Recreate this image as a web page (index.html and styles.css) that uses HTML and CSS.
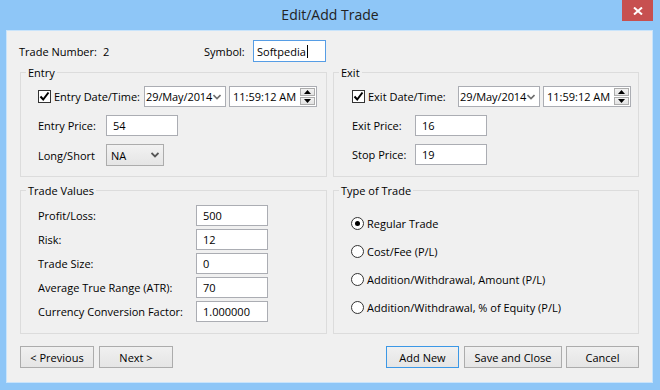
FILE: index.html
```html
<!DOCTYPE html>
<html lang="en">
<head>
    <meta charset="UTF-8">
    <title>Edit/Add Trade</title>
    <link rel="stylesheet" href="styles.css">
</head>
<body>
    <div class="window">
        <div class="titlebar">
            <span class="title">Edit/Add Trade</span>
            <div class="close-btn">
                <svg width="10" height="8" viewBox="0 0 10 8"><path d="M1 0.5 L9 7.5 M9 0.5 L1 7.5" stroke="#fff" stroke-width="2"/></svg>
            </div>
        </div>

        <div class="client">
            <div class="top-row">
                <span class="trade-label">Trade Number:</span>
                <span class="trade-number">2</span>
                <span class="symbol-label">Symbol:</span>
                <div class="textbox symbol-box">Softpedia<span class="caret"></span></div>
            </div>

            <div class="groups">
                <fieldset class="group entry-group">
                    <legend>Entry</legend>
                    <div class="group-body stack">
                        <div class="row">
                            <label class="check-label">
                                <span class="checkbox">
                                    <svg width="11" height="11" viewBox="0 0 11 11"><path d="M1.5 5.5 L4.2 8.5 L9.5 1.5" fill="none" stroke="#000" stroke-width="2"/></svg>
                                </span>
                                Entry Date/Time:
                            </label>
                            <div class="datebox">
                                <span class="date-text">29/May/2014</span>
                                <span class="chevron"><svg width="8" height="6" viewBox="0 0 8 6"><path d="M0.5 1 L4 4.5 L7.5 1" fill="none" stroke="#6d6d6d" stroke-width="1.6"/></svg></span>
                            </div>
                            <div class="timebox">
                                <span>11:59:12 AM</span>
                                <div class="spin">
                                    <div class="spin-btn"><svg width="7" height="4" viewBox="0 0 7 4"><path d="M0 4 L3.5 0 L7 4 Z" fill="#000"/></svg></div>
                                    <div class="spin-btn"><svg width="7" height="4" viewBox="0 0 7 4"><path d="M0 0 L3.5 4 L7 0 Z" fill="#000"/></svg></div>
                                </div>
                            </div>
                        </div>
                        <div class="row">
                            <span class="field-label">Entry Price:</span>
                            <div class="textbox">54</div>
                        </div>
                        <div class="row">
                            <span class="field-label">Long/Short</span>
                            <div class="combobox">
                                <span>NA</span>
                                <span class="chevron"><svg width="8" height="6" viewBox="0 0 8 6"><path d="M0.5 1 L4 4.5 L7.5 1" fill="none" stroke="#555" stroke-width="1.8"/></svg></span>
                            </div>
                        </div>
                    </div>
                </fieldset>

                <fieldset class="group exit-group">
                    <legend>Exit</legend>
                    <div class="group-body stack">
                        <div class="row">
                            <label class="check-label">
                                <span class="checkbox">
                                    <svg width="11" height="11" viewBox="0 0 11 11"><path d="M1.5 5.5 L4.2 8.5 L9.5 1.5" fill="none" stroke="#000" stroke-width="2"/></svg>
                                </span>
                                Exit Date/Time:
                            </label>
                            <div class="datebox">
                                <span class="date-text">29/May/2014</span>
                                <span class="chevron"><svg width="8" height="6" viewBox="0 0 8 6"><path d="M0.5 1 L4 4.5 L7.5 1" fill="none" stroke="#6d6d6d" stroke-width="1.6"/></svg></span>
                            </div>
                            <div class="timebox">
                                <span>11:59:12 AM</span>
                                <div class="spin">
                                    <div class="spin-btn"><svg width="7" height="4" viewBox="0 0 7 4"><path d="M0 4 L3.5 0 L7 4 Z" fill="#000"/></svg></div>
                                    <div class="spin-btn"><svg width="7" height="4" viewBox="0 0 7 4"><path d="M0 0 L3.5 4 L7 0 Z" fill="#000"/></svg></div>
                                </div>
                            </div>
                        </div>
                        <div class="row">
                            <span class="field-label">Exit Price:</span>
                            <div class="textbox">16</div>
                        </div>
                        <div class="row">
                            <span class="field-label">Stop Price:</span>
                            <div class="textbox">19</div>
                        </div>
                    </div>
                </fieldset>

                <fieldset class="group values-group">
                    <legend>Trade Values</legend>
                    <div class="group-body values">
                        <div class="row"><span class="field-label">Profit/Loss:</span><div class="textbox">500</div></div>
                        <div class="row"><span class="field-label">Risk:</span><div class="textbox">12</div></div>
                        <div class="row"><span class="field-label">Trade Size:</span><div class="textbox">0</div></div>
                        <div class="row"><span class="field-label">Average True Range (ATR):</span><div class="textbox">70</div></div>
                        <div class="row"><span class="field-label">Currency Conversion Factor:</span><div class="textbox">1.000000</div></div>
                    </div>
                </fieldset>

                <fieldset class="group type-group">
                    <legend>Type of Trade</legend>
                    <div class="group-body radios">
                        <div class="radio-row"><span class="radio checked"></span>Regular Trade</div>
                        <div class="radio-row"><span class="radio"></span>Cost/Fee (P/L)</div>
                        <div class="radio-row"><span class="radio"></span>Addition/Withdrawal, Amount (P/L)</div>
                        <div class="radio-row"><span class="radio"></span>Addition/Withdrawal, % of Equity (P/L)</div>
                    </div>
                </fieldset>
            </div>

            <div class="button-row">
                <div class="btn">&lt; Previous</div>
                <div class="btn">Next &gt;</div>
                <div class="spacer"></div>
                <div class="btn default">Add New</div>
                <div class="btn wide">Save and Close</div>
                <div class="btn cancel">Cancel</div>
            </div>
        </div>
    </div>
</body>
</html>
```

FILE: styles.css
```css
body {
    margin: 0;
    font-family: "Open Sans", "Noto Sans", sans-serif;
    font-size: 11px;
    color: #000;
    background: #8ec6f7;
}
.window {
    width: 660px;
    height: 390px;
    background: #8ec6f7;
    display: flex;
    flex-direction: column;
}
.titlebar {
    height: 30px;
    display: flex;
    align-items: center;
    justify-content: center;
    position: relative;
}
.title {
    font-size: 14px;
    color: #222;
    margin-top: -1px;
}
.close-btn {
    position: absolute;
    top: 0;
    left: 622px;
    width: 31px;
    height: 21px;
    background: #c75050;
    display: flex;
    align-items: center;
    justify-content: center;
}
.client {
    margin-left: 6px;
    width: 647px;
    height: 353px;
    box-sizing: border-box;
    border: 1px solid #c9e4fb;
    background: #f0f0f0;
    padding: 0 13px;
}
.top-row {
    display: flex;
    align-items: center;
    height: 22px;
    margin-top: 9px;
}
.trade-label {
    margin-left: -1px;
    width: 84px;
}
.trade-number {
    width: 101px;
}
.symbol-label {
    width: 49px;
}
.textbox {
    width: 72px;
    height: 21px;
    box-sizing: border-box;
    border: 1px solid #abadb3;
    background: #fff;
    padding-left: 6px;
    display: flex;
    align-items: center;
}
.symbol-box {
    width: 73px;
    height: 22px;
    border-color: #569de5;
    padding-left: 3px;
}
.caret {
    display: inline-block;
    width: 1px;
    height: 13px;
    background: #000;
    margin-left: 1px;
}
.groups {
    display: grid;
    grid-template-columns: 307px 306px;
    column-gap: 6px;
    row-gap: 6px;
    margin-top: 3px;
}
.group {
    margin: 0;
    padding: 0;
    border: 1px solid #dcdcdc;
    min-width: 0;
}
.group legend {
    margin-left: 5px;
    padding: 0 2px;
    line-height: 15px;
}
.group-body {
    padding-left: 17px;
}
.exit-group .group-body {
    padding-left: 18px;
}
.stack {
    display: flex;
    flex-direction: column;
    gap: 8px;
    padding-top: 6px;
    padding-bottom: 10px;
}
.row {
    display: flex;
    align-items: center;
}
.field-label {
    width: 68px;
}
.exit-group .field-label {
    width: 63px;
}
.values-group .field-label {
    width: 158px;
}
.check-label {
    display: flex;
    align-items: center;
    width: 106px;
}
.checkbox {
    width: 13px;
    height: 13px;
    box-sizing: border-box;
    border: 1px solid #333;
    background: #fff;
    display: flex;
    align-items: center;
    justify-content: center;
    margin-right: 3px;
}
.datebox,
.timebox {
    height: 21px;
    box-sizing: border-box;
    border: 1px solid #abadb3;
    background: #fff;
    display: flex;
    align-items: center;
}
.datebox {
    width: 82px;
    margin-right: 3px;
    padding-left: 1px;
}
.date-text {
    white-space: nowrap;
    letter-spacing: -0.1px;
}
.datebox .chevron {
    margin-left: 1px;
    display: flex;
}
.timebox {
    width: 88px;
    padding-left: 3px;
    justify-content: space-between;
}
.spin {
    display: flex;
    flex-direction: column;
    gap: 1px;
    margin-right: 1px;
}
.spin-btn {
    width: 15px;
    height: 8px;
    box-sizing: border-box;
    border: 1px solid #acacac;
    background: linear-gradient(#f2f2f2, #e3e3e3);
    display: flex;
    align-items: center;
    justify-content: center;
}
.combobox {
    width: 58px;
    height: 22px;
    box-sizing: border-box;
    border: 1px solid #acacac;
    background: linear-gradient(#f2f2f2, #e5e5e5);
    display: flex;
    align-items: center;
    justify-content: space-between;
    padding: 0 4px;
}
.combobox .chevron {
    display: flex;
}
.values {
    display: flex;
    flex-direction: column;
    gap: 3px;
    padding-top: 7px;
    padding-bottom: 11px;
}
.radios {
    display: flex;
    flex-direction: column;
    gap: 12px;
    padding-top: 17px;
}
.radio-row {
    display: flex;
    align-items: center;
    height: 16px;
}
.radio {
    width: 13px;
    height: 13px;
    box-sizing: border-box;
    border: 1px solid #333;
    border-radius: 50%;
    background: #fff;
    margin-right: 3px;
    display: flex;
    align-items: center;
    justify-content: center;
}
.radio.checked::after {
    content: "";
    width: 5px;
    height: 5px;
    border-radius: 50%;
    background: #000;
}
.button-row {
    display: flex;
    gap: 5px;
    margin-top: 12px;
}
.spacer {
    flex: 1;
}
.btn {
    width: 74px;
    height: 22px;
    box-sizing: border-box;
    border: 1px solid #acacac;
    background: linear-gradient(#f0f0f0, #e5e5e5);
    display: flex;
    align-items: center;
    justify-content: center;
}
.btn.default {
    border-color: #3c98e6;
    width: 73px;
}
.btn.wide {
    width: 98px;
}
.btn.cancel {
    width: 73px;
    margin-left: -1px;
}
```
